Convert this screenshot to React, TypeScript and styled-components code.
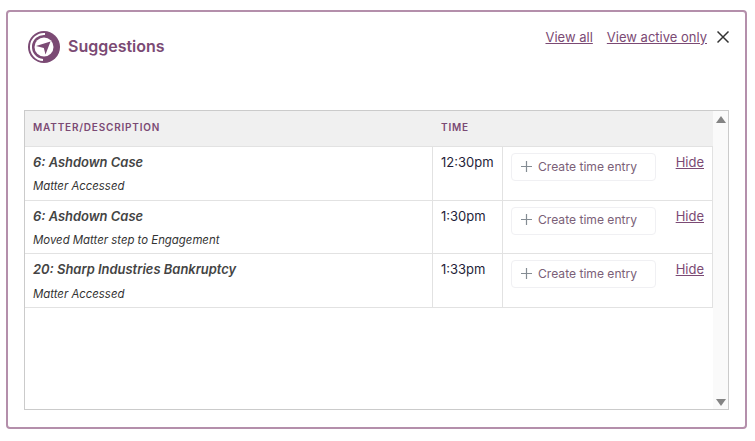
import React from 'react';
import styled, { createGlobalStyle } from 'styled-components';

interface Suggestion {
    matter: string,
    description: string,
    time: string
};

const suggestions: Array<Suggestion> = [
    { matter: '6: Ashdown Case', description: 'Matter Accessed', time: '12:30pm' },
    { matter: '6: Ashdown Case', description: 'Moved Matter step to Engagement', time: '1:30pm' },
    { matter: '20: Sharp Industries Bankruptcy', description: 'Matter Accessed', time: '1:33pm' }
];

const GlobalStyle = createGlobalStyle`
    html, body {
        margin: 0;
        padding: 0;
        background: #fff;
    }
    body {
        font-family: Inter, "Liberation Sans", sans-serif;
    }
`

const Modal = styled.div`
    box-sizing: border-box;
    width: 741px;
    height: 419px;
    margin: 10px 0 0 6px;
    padding: 19px 16px 16px 16px;
    border: 2px solid #b48fab;
    border-radius: 4px;
    background: #fff;
    display: flex;
    flex-direction: column;
`

const ModalHeader = styled.div`
    display: flex;
    justify-content: space-between;
    align-items: flex-start;
    height: 79px;
    padding: 0 0 0 4px;
`

const TitleGroup = styled.div`
    display: flex;
    align-items: center;
    gap: 8px;
    height: 32px;
`

const Title = styled.h2`
    margin: 0 0 2px 0;
    font-size: 16px;
    font-weight: 600;
    color: #7b4a74;
`

const HeaderActions = styled.div`
    display: flex;
    align-items: center;
    gap: 14px;
    height: 14px;
    margin: -1px -2px 0 0;
`

const LinkText = styled.a`
    font-size: 13px;
    line-height: 16px;
    color: #7b4a74;
    text-decoration: underline;
    cursor: pointer;
`

const CloseButton = styled.button`
    display: flex;
    width: 14px;
    height: 14px;
    margin-left: -4px;
    padding: 0;
    border: 0;
    background: none;
    color: #333;
`

const TableFrame = styled.div`
    display: flex;
    width: 705px;
    height: 300px;
    box-sizing: border-box;
    border: 1px solid #cbcbcb;
`

const TableArea = styled.div`
    flex: 1;
    min-width: 0;
`

const Scrollbar = styled.div`
    width: 15px;
    background: #fafafa;
    display: flex;
    flex-direction: column;
    justify-content: space-between;
    align-items: center;
    padding: 5px 0 3px 0;
`

const Arrow = styled.div<{ $down?: boolean }>`
    width: 0;
    height: 0;
    border-left: 5px solid transparent;
    border-right: 5px solid transparent;
    ${({ $down }) => $down ? 'border-top: 7px solid #848484;' : 'border-bottom: 7px solid #848484;'}
`

const Row = styled.div`
    display: grid;
    grid-template-columns: 408px 70px 1fr;
    height: 53.6px;
    box-sizing: border-box;
    border-bottom: 1px solid #e2e2e2;
`

const HeaderRow = styled(Row)`
    height: 36px;
    background: #f0f0f0;
    grid-template-columns: 408px 1fr;
`

const HeaderCell = styled.div`
    padding: 0 0 3px 8px;
    display: flex;
    align-items: center;
    font-size: 10px;
    font-weight: 600;
    letter-spacing: 0.8px;
    color: #7b4a74;
`

const Cell = styled.div`
    padding: 6px 8px 0 8px;
    border-right: 1px solid #e2e2e2;
`

const Matter = styled.div`
    font-size: 12.95px;
    line-height: 18px;
    font-weight: 600;
    font-style: italic;
    color: #444;
`

const Description = styled.div`
    margin-top: 7.4px;
    font-size: 11.4px;
    line-height: 16px;
    font-style: italic;
    color: #333;
`

const Time = styled.div`
    font-size: 13px;
    line-height: 18px;
    color: #1f1f3a;
`

const ActionCell = styled(Cell)`
    display: flex;
    align-items: flex-start;
    justify-content: space-between;
    padding: 6px 8px 0 8px;
`

const CreateButton = styled.button`
    display: flex;
    align-items: center;
    gap: 6px;
    box-sizing: border-box;
    width: 145px;
    height: 28px;
    padding: 0 0 1.4px 9px;
    border: 1px solid #f0f0f3;
    border-radius: 4px;
    background: #fff;
    font-family: inherit;
    font-size: 12.1px;
    color: #7b5f78;
`

const HideLink = styled(LinkText)`
    margin-top: 1px;
`

const SuggestionIcon = () => (
    <svg width="32" height="34" viewBox="0 0 32 34">
        <circle cx="16" cy="17" r="16" fill="#7b4a74" />
        <path d="M17 4A13 13 0 1 0 15 30" fill="none" stroke="#fff" strokeWidth="2" />
        <circle cx="16" cy="17" r="9.5" fill="#fff" />
        <path d="M22.5 11.5L17.5 24.5L15.8 18L8 16z" fill="#7b4a74" />
    </svg>
);

const CloseIcon = () => (
    <svg width="14" height="14" viewBox="0 0 14 14">
        <path d="M0.5 1.5l11 11M11.5 1.5L0.5 12.5" stroke="currentColor" strokeWidth="1.5" fill="none" />
    </svg>
);

const PlusIcon = () => (
    <svg width="11" height="11" viewBox="0 0 11 11">
        <path d="M5.5 0v11M0 5.5h11" stroke="#848c93" strokeWidth="1.2" fill="none" />
    </svg>
);

const App = () => {
    return (
        <>
            <GlobalStyle />
            <Modal>
                <ModalHeader>
                    <TitleGroup>
                        <SuggestionIcon />
                        <Title>Suggestions</Title>
                    </TitleGroup>
                    <HeaderActions>
                        <LinkText>View all</LinkText>
                        <LinkText>View active only</LinkText>
                        <CloseButton><CloseIcon /></CloseButton>
                    </HeaderActions>
                </ModalHeader>
                <TableFrame>
                    <TableArea>
                        <HeaderRow>
                            <HeaderCell>MATTER/DESCRIPTION</HeaderCell>
                            <HeaderCell>TIME</HeaderCell>
                        </HeaderRow>
                        {suggestions.map((suggestion, index) => (
                            <Row key={index}>
                                <Cell>
                                    <Matter>{suggestion.matter}</Matter>
                                    <Description>{suggestion.description}</Description>
                                </Cell>
                                <Cell><Time>{suggestion.time}</Time></Cell>
                                <ActionCell>
                                    <CreateButton><PlusIcon />Create time entry</CreateButton>
                                    <HideLink>Hide</HideLink>
                                </ActionCell>
                            </Row>
                        ))}
                    </TableArea>
                    <Scrollbar>
                        <Arrow />
                        <Arrow $down />
                    </Scrollbar>
                </TableFrame>
            </Modal>
        </>
    );
}

export default App;
